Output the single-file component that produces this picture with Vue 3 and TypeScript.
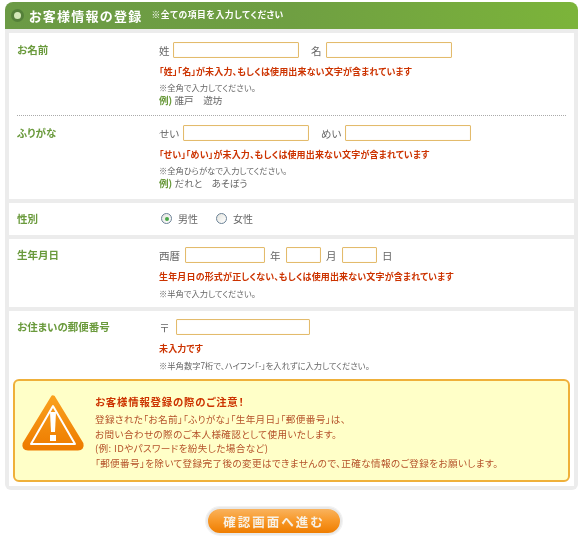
<script setup lang="ts">
const noteLines: string[] = [
  '登録された「お名前」「ふりがな」「生年月日」「郵便番号」は、',
  'お問い合わせの際のご本人様確認として使用いたします。',
  '(例: IDやパスワードを紛失した場合など)',
  '「郵便番号」を除いて登録完了後の変更はできませんので、正確な情報のご登録をお願いします。'
]
</script>

<template>
  <div class="page">
    <div class="head">
      <span class="dot"><i></i></span>
      <h1>お客様情報の登録</h1>
      <span class="sub">※全ての項目を入力してください</span>
    </div>
    <div class="panel">
      <section class="block b-name">
        <div class="row r1">
          <div class="label">お名前</div>
          <div class="body">
            <div class="fields">
              <span class="w1">姓</span><input class="in126" />
              <span class="w2">名</span><input class="in126" />
            </div>
            <p class="err e1">「姓」「名」が未入力、もしくは使用出来ない文字が含まれています</p>
            <p class="note">※全角で入力してください。</p>
            <p class="ex"><b>例)</b> 誰戸　遊坊</p>
          </div>
        </div>
        <div class="dash"></div>
        <div class="row r2">
          <div class="label">ふりがな</div>
          <div class="body">
            <div class="fields">
              <span class="w3">せい</span><input class="in126" />
              <span class="w4">めい</span><input class="in126" />
            </div>
            <p class="err e1">「せい」「めい」が未入力、もしくは使用出来ない文字が含まれています</p>
            <p class="note">※全角ひらがなで入力してください。</p>
            <p class="ex"><b>例)</b> だれと　あそぼう</p>
          </div>
        </div>
      </section>
      <section class="block b-gender">
        <div class="label">性別</div>
        <div class="radios">
          <span class="radio on"><i></i></span><span class="rt">男性</span>
          <span class="radio"></span><span class="rt">女性</span>
        </div>
      </section>
      <section class="block b-birth">
        <div class="label">生年月日</div>
        <div class="body">
          <div class="fields small">
            <span class="w5">西暦</span><input class="in80" />
            <span class="w6">年</span><input class="in35" />
            <span class="w6">月</span><input class="in35" />
            <span class="w7">日</span>
          </div>
          <p class="err e2">生年月日の形式が正しくない、もしくは使用出来ない文字が含まれています</p>
          <p class="note n2">※半角で入力してください。</p>
        </div>
      </section>
      <section class="block b-zip">
        <div class="zip-row">
          <div class="label">お住まいの郵便番号</div>
          <div class="body">
            <div class="fields">
              <span class="w8">〒</span><input class="in134" />
            </div>
            <p class="err e3">未入力です</p>
            <p class="note n3">※半角数字7桁で、ハイフン「-」を入れずに入力してください。</p>
          </div>
        </div>
        <div class="notice">
          <svg class="warn" viewBox="0 0 64 58" width="64" height="58" aria-hidden="true">
            <defs>
              <linearGradient id="wg" x1="0" y1="0" x2="0" y2="1">
                <stop offset="0" stop-color="#f9a01e" />
                <stop offset="1" stop-color="#ee7c00" />
              </linearGradient>
            </defs>
            <path d="M32 4 L60 50 Q61 54 57 54 L7 54 Q3 54 4 50 Z" fill="url(#wg)" stroke="url(#wg)" stroke-width="5" stroke-linejoin="round" />
            <path d="M32 12 L54 50 L10 50 Z" fill="none" stroke="#fff" stroke-width="2" stroke-linejoin="round" />
            <path d="M29 18 H35 L34 38 H30 Z" fill="#fff" />
            <rect x="29" y="41" width="6" height="6" fill="#fff" />
          </svg>
          <div class="notice-text">
            <h2>お客様情報登録の際のご注意！</h2>
            <p v-for="line in noteLines" :key="line">{{ line }}</p>
          </div>
        </div>
      </section>
    </div>
    <div class="foot">
      <button type="button" class="next">確認画面へ進む</button>
    </div>
  </div>
</template>

<style>
html, body { margin: 0; background: #fff; }
</style>

<style scoped>
.page {
  width: 580px;
  height: 537px;
  overflow: hidden;
  padding: 2px 2px 0 5px;
  box-sizing: border-box;
  font-family: "Noto Sans CJK JP", "Noto Sans", sans-serif;
  font-size: 10px;
  font-feature-settings: "palt";
  color: #666;
  background: #fff;
  filter: blur(0.3px);
}
.head {
  height: 27px;
  display: flex;
  align-items: center;
  padding-left: 6px;
  border-radius: 8px 8px 0 0;
  background: linear-gradient(90deg, #6b9a45 0%, #6f9f42 50%, #7cb43a 100%);
  color: #fff;
}
.dot {
  width: 13px;
  height: 13px;
  border-radius: 50%;
  background: #55803a;
  display: flex;
  align-items: center;
  justify-content: center;
}
.dot i {
  width: 7px;
  height: 7px;
  border-radius: 50%;
  background: #d4e8b8;
}
h1 {
  margin: 0 0 0 5px;
  font-size: 13px;
  font-weight: 700;
  letter-spacing: 1.25px;
  line-height: 1;
}
.sub {
  margin-left: 9px;
  font-size: 8.8px;
  font-weight: 700;
  letter-spacing: 0.58px;
  line-height: 1;
}
.panel {
  background: #ececec;
  padding: 4px;
  border-radius: 0 0 6px 6px;
  display: flex;
  flex-direction: column;
  gap: 4px;
}
.block { background: #fff; }
.b-name { height: 166px; box-sizing: border-box; padding: 0 8px; }
.row { display: flex; }
.r1 { height: 82px; padding-top: 9px; box-sizing: border-box; }
.r2 { padding-top: 9px; }
.label {
  width: 142px;
  flex: none;
  font-weight: 700;
  font-size: 10.5px;
  line-height: 16px;
  color: #6a9a3c;
}
.body { flex: 1; min-width: 0; }
.fields {
  display: flex;
  align-items: center;
  height: 16px;
  font-size: 10.5px;
}
input {
  display: block;
  box-sizing: border-box;
  height: 16px;
  padding: 0;
  margin: 0;
  background: #fff;
  border: 1px solid #e3bb6c;
  border-radius: 1px;
  box-shadow: inset 0 0 1px #f2dfb6;
}
.in126 { width: 126px; }
.in80 { width: 80px; }
.in35 { width: 35px; }
.in134 { width: 134px; }
.w1 { width: 14px; }
.w2 { width: 27px; padding-left: 12px; box-sizing: border-box; }
.w3 { width: 24px; }
.w4 { width: 36px; padding-left: 12px; box-sizing: border-box; }
.w5 { width: 26px; }
.w6 { width: 21px; padding-left: 5px; box-sizing: border-box; }
.w7 { padding-left: 5px; }
.w8 { width: 17px; padding-left: 1px; box-sizing: border-box; }
p { margin: 0; }
.err {
  color: #cc3300;
  font-weight: 700;
  font-size: 9px;
  line-height: 12px;
  letter-spacing: 0.16px;
  white-space: nowrap;
}
.e1, .e2, .e3 { margin-top: 8px; }
.note {
  font-size: 8.3px;
  line-height: 12px;
  margin-top: 3px;
  white-space: nowrap;
}
.n2, .n3 { margin-top: 4px; }
.ex { font-size: 9.6px; line-height: 15px; }
.ex b { color: #6a9a3c; font-size: 9.6px; }
.dash { border-top: 1px dotted #aaa; }
.b-gender {
  height: 32px;
  box-sizing: border-box;
  padding: 0 0 1px 8px;
  display: flex;
  align-items: center;
}
.radios { display: flex; align-items: center; font-size: 10px; }
.radio {
  width: 11px;
  height: 11px;
  box-sizing: border-box;
  border: 1px solid #6b8296;
  border-radius: 50%;
  margin-left: 2px;
  background: linear-gradient(135deg, #e4e4de, #fff);
  display: flex;
  align-items: center;
  justify-content: center;
}
.radio i { width: 4px; height: 4px; border-radius: 50%; background: #4aa84a; }
.rt { margin-left: 6px; width: 36px; }
.b-birth {
  height: 68px;
  box-sizing: border-box;
  padding: 8px 0 0 8px;
  display: flex;
}
.b-zip { padding: 8px 4px 4px; }
.zip-row { display: flex; padding-left: 4px; height: 60px; }
.zip-row .label { width: 142px; }
.notice {
  display: flex;
  height: 103px;
  box-sizing: border-box;
  background: #ffffc8;
  border: 2px solid #efb03a;
  border-radius: 6px;
  padding: 13px 0 0 6px;
  color: #b5522a;
}
.warn { flex: none; }
.notice-text { margin-left: 10px; padding-top: 1px; }
h2 {
  margin: 0 0 4px;
  font-size: 10.4px;
  line-height: 13px;
  letter-spacing: 0.8px;
  color: #cc3300;
  font-weight: 700;
}
.notice-text p {
  font-size: 9.6px;
  line-height: 14.6px;
  letter-spacing: 0.36px;
  white-space: nowrap;
}
.foot { display: flex; padding-top: 17px; }
.next {
  margin-left: 201px;
  width: 136px;
  height: 28px;
  border-radius: 14px;
  border: 2px solid #e8e8e8;
  padding: 0;
  background: linear-gradient(180deg, #f9b35e 0%, #f89a2c 45%, #ef7d00 100%);
  color: #f7f1e6;
  font-family: inherit;
  font-weight: 700;
  font-size: 12.5px;
  letter-spacing: 2px;
  box-shadow: 0 0 0 1px #f2f2f2;
}
</style>
